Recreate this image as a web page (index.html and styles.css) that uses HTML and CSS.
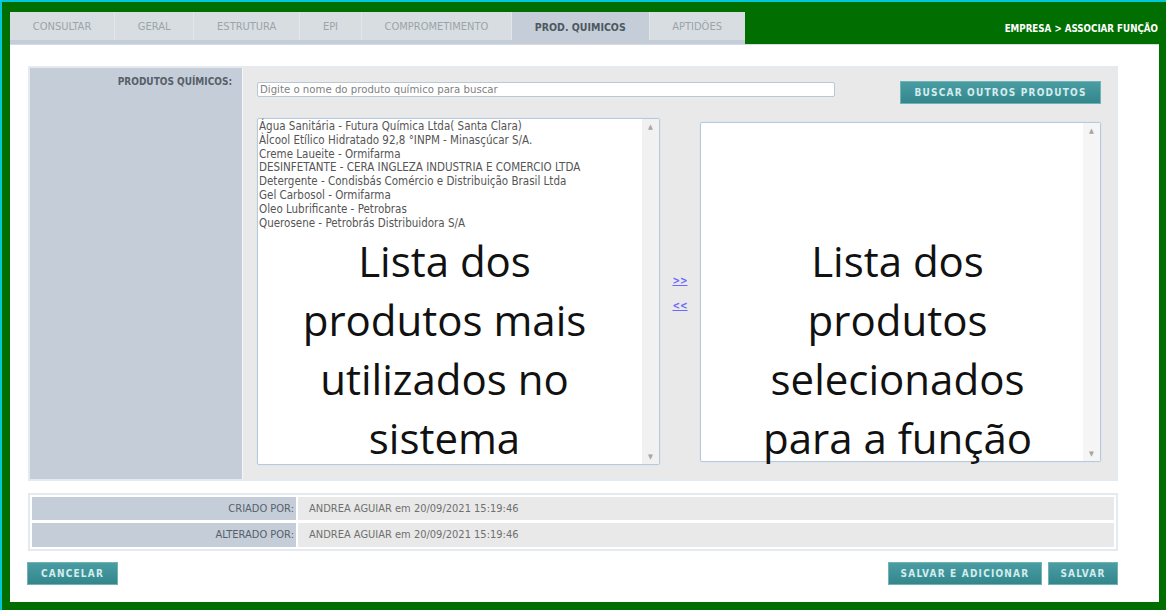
FILE: index.html
```html
<!DOCTYPE html>
<html lang="pt-BR">
<head>
  <meta charset="UTF-8">
  <title>Empresa - Associar Função</title>
  <link rel="stylesheet" href="styles.css">
</head>
<body>
  <div class="frame">

    <div class="topbar">
      <div class="tabs">
        <div class="tab">CONSULTAR</div>
        <div class="tab">GERAL</div>
        <div class="tab">ESTRUTURA</div>
        <div class="tab">EPI</div>
        <div class="tab">COMPROMETIMENTO</div>
        <div class="tab active">PROD. QUIMICOS</div>
        <div class="tab">APTIDÕES</div>
      </div>
      <div class="crumb">EMPRESA &gt; ASSOCIAR FUNÇÃO</div>
    </div>

    <div class="panel">

      <!-- produtos quimicos -->
      <div class="form-box">
        <div class="label-col">PRODUTOS QUÍMICOS:</div>
        <div class="field-col">
          <div class="search-row">
            <input class="search" type="text" placeholder="Digite o nome do produto químico para buscar">
            <button class="btn btn-search">BUSCAR OUTROS PRODUTOS</button>
          </div>
          <div class="lists-row">
            <div class="list list-left">
              <div class="items">
                <div class="item">Água Sanitária - Futura Química Ltda( Santa Clara)</div>
                <div class="item">Àlcool Etílico Hidratado 92,8 °INPM - Minasçúcar S/A.</div>
                <div class="item">Creme Laueite - Ormifarma</div>
                <div class="item">DESINFETANTE - CERA INGLEZA INDUSTRIA E COMERCIO LTDA</div>
                <div class="item">Detergente - Condisbás Comércio e Distribuição Brasil Ltda</div>
                <div class="item">Gel Carbosol - Ormifarma</div>
                <div class="item">Oleo Lubrificante - Petrobras</div>
                <div class="item">Querosene - Petrobrás Distribuidora S/A</div>
                <div class="note">Lista dos produtos mais utilizados no sistema</div>
              </div>
              <div class="scroll"><span>▲</span><span>▼</span></div>
            </div>
            <div class="movers">
              <a href="#" class="mover">&gt;&gt;</a>
              <a href="#" class="mover">&lt;&lt;</a>
            </div>
            <div class="list list-right">
              <div class="items">
                <div class="note">Lista dos produtos selecionados para a função</div>
              </div>
              <div class="scroll"><span>▲</span><span>▼</span></div>
            </div>
          </div>
        </div>
      </div>

      <!-- auditoria -->
      <div class="audit">
        <div class="audit-row">
          <div class="audit-label">CRIADO POR:</div>
          <div class="audit-value">ANDREA AGUIAR em 20/09/2021 15:19:46</div>
        </div>
        <div class="audit-row">
          <div class="audit-label">ALTERADO POR:</div>
          <div class="audit-value">ANDREA AGUIAR em 20/09/2021 15:19:46</div>
        </div>
      </div>

      <div class="actions">
        <button class="btn btn-cancel">CANCELAR</button>
        <div class="actions-right">
          <button class="btn btn-save-add">SALVAR E ADICIONAR</button>
          <button class="btn btn-save">SALVAR</button>
        </div>
      </div>

    </div>
  </div>
</body>
</html>
```

FILE: styles.css
```css
* {
  box-sizing: border-box;
}

body {
  margin: 0;
  font-family: 'DejaVu Sans Condensed', 'DejaVu Sans', sans-serif;
  background: #006e00;
}

.frame {
  height: 610px;
  display: flex;
  flex-direction: column;
  background: #006e00;
  border-top: 2px solid #00c8dc;
  border-left: 2px solid #00c8dc;
  padding: 10px 7px 8px 8px;
}

/* Tabs */
.topbar {
  height: 32px;
  display: flex;
  align-items: stretch;
}

.tabs {
  display: flex;
  border-bottom: 4px solid #c5ced8;
  background: #d8dde1;
}

.tab {
  height: 28px;
  line-height: 30px;
  padding: 0 22.8px;
  font-size: 11px;
  color: #9aa4ab;
  border-right: 1px solid #e3e7ea;
}

.tab.active {
  background: #c5ced8;
  color: #4d5860;
  font-weight: bold;
  font-size: 10.5px;
}

.tab:last-child {
  border-right: none;
}

.crumb {
  margin-left: auto;
  margin-right: 1px;
  align-self: center;
  color: #fff;
  font-size: 9.7px;
  font-weight: bold;
  padding-top: 1px;
}

/* Main panel */
.panel {
  flex: 1;
  background: #fff;
  border-top: 1px solid #d4dbe2;
  padding: 21px 41px 0 18px;
}

.form-box {
  height: 415px;
  display: flex;
  border: 2px solid #e4eaf0;
}

.label-col {
  width: 212px;
  background: #c5ced8;
  text-align: right;
  padding: 8px 10px 0 0;
  font-size: 10px;
  font-weight: bold;
  color: #55606a;
}

.field-col {
  flex: 1;
  background: #e9e9e9;
  border-left: 1px solid #f4f6f8;
  padding: 13px 15px 0 14px;
}

.search-row {
  display: flex;
  align-items: flex-start;
}

.search {
  width: 578px;
  height: 15px;
  margin-top: 1px;
  border: 1px solid #b9c8d6;
  border-radius: 2px;
  padding: 0 2px;
  font-family: inherit;
  font-size: 11.3px;
  background: #fff;
}

.search::placeholder {
  color: #7f7f7f;
}

.btn {
  font-family: inherit;
  font-weight: bold;
  font-size: 10px;
  letter-spacing: 1.2px;
  color: #d3ecee;
  background: linear-gradient(#4a9ea3, #33878c);
  border: 1px solid #6fb3b7;
  height: 23px;
  padding: 0;
  cursor: pointer;
}

.btn-search {
  margin-left: auto;
  width: 201px;
}

.lists-row {
  display: flex;
  align-items: flex-start;
  margin-top: 14px;
}

.list {
  display: flex;
  background: #fff;
  border: 1px solid #b9c9d9;
  border-radius: 2px;
  box-shadow: 0 0 0 1px #dfe7ee;
}

.list-left {
  width: 403px;
  height: 347px;
}

.list-right {
  width: 401px;
  height: 340px;
  margin-top: 4px;
}

.items {
  flex: 1;
  padding: 1px 0 0 1px;
}

.item {
  font-size: 11.5px;
  line-height: 13.8px;
  color: #555;
  white-space: nowrap;
}

.note {
  font-family: 'Open Sans', sans-serif;
  font-size: 42px;
  line-height: 59px;
  color: #111;
  text-align: center;
  padding: 0 36px 0 24px;
  margin-top: 1px;
}

.list-right .items {
  padding-top: 108px;
}

.list-right .note {
  padding: 0 30px 0 40px;
  margin-top: 0;
}

.scroll {
  width: 17px;
  background: #f1f1f1;
  display: flex;
  flex-direction: column;
  justify-content: space-between;
  align-items: center;
  padding: 4px 0 3px;
  font-size: 7px;
  color: #a6a6a6;
}

.list-right .scroll {
  background: #f5f5f5;
}

.movers {
  width: 40px;
  display: flex;
  flex-direction: column;
  align-items: center;
  gap: 11px;
  padding-top: 156px;
}

.mover {
  font-size: 10px;
  font-weight: bold;
  line-height: 14px;
  color: #6a6aff;
}

/* Auditoria */
.audit {
  margin-top: 12px;
  border: 2px solid #e4eaf0;
  padding: 2px;
  display: flex;
  flex-direction: column;
  gap: 3px;
}

.audit-row {
  display: flex;
  gap: 2px;
  height: 23px;
  font-size: 11px;
}

.audit-row:last-child {
  height: 24px;
}

.audit-label {
  width: 264px;
  background: #c5ced8;
  text-align: right;
  padding-right: 2px;
  line-height: 23px;
  color: #55606a;
}

.audit-value {
  flex: 1;
  background: #e9e9e9;
  padding-left: 11px;
  line-height: 23px;
  color: #6f6f6f;
}

/* Botoes */
.actions {
  display: flex;
  margin-top: 11px;
}

.btn-cancel {
  width: 91px;
  margin-left: -1px;
}

.actions-right {
  margin-left: auto;
  display: flex;
  gap: 6px;
}

.btn-save-add {
  width: 154px;
}

.btn-save {
  width: 70px;
}
```
